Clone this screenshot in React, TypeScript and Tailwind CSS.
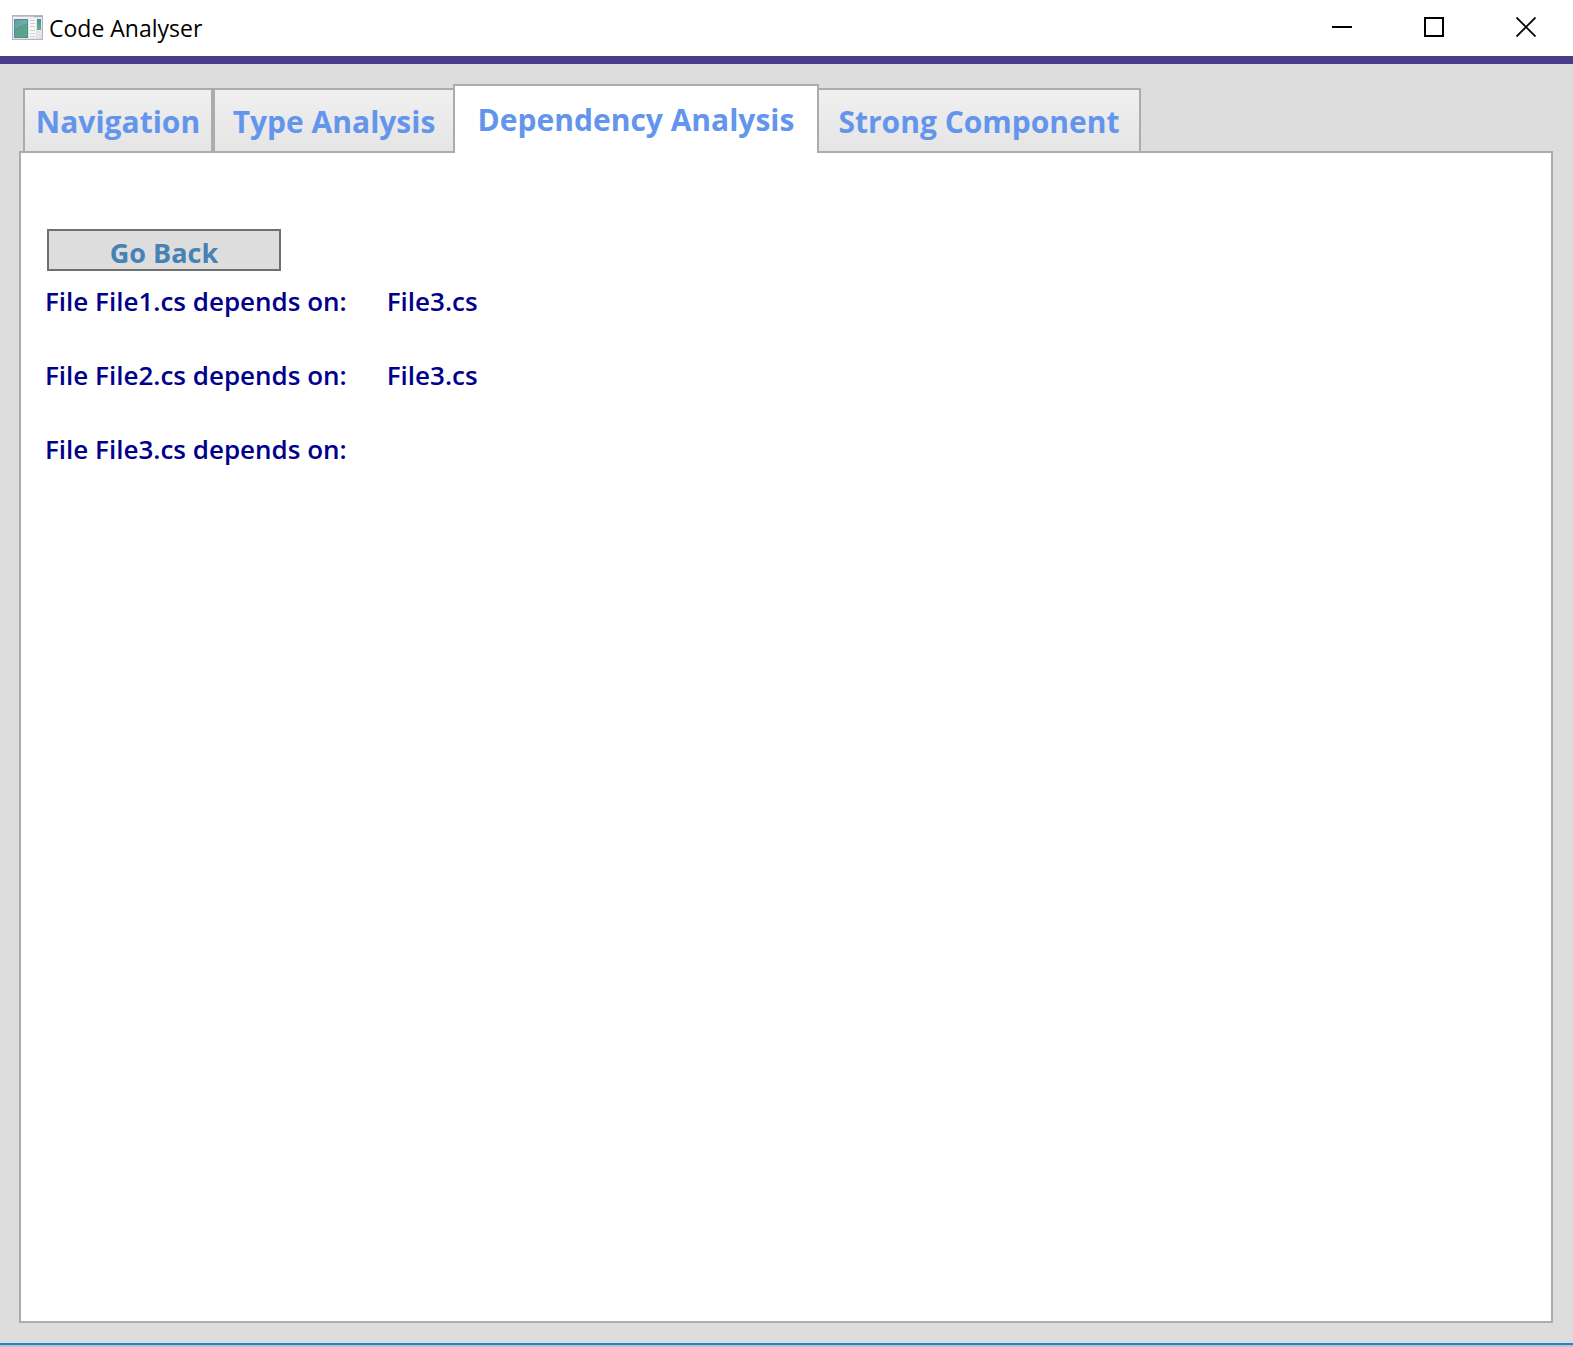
import { useState } from "react";

const tabs = [
  { label: "Navigation", width: "w-[190px]" },
  { label: "Type Analysis", width: "w-[240px]" },
  { label: "Dependency Analysis", width: "w-[366px]" },
  { label: "Strong Component", width: "w-[322px]" },
];

const dependencies = [
  { file: "File1.cs", on: ["File3.cs"] },
  { file: "File2.cs", on: ["File3.cs"] },
  { file: "File3.cs", on: [] as string[] },
];

function AppIcon() {
  return (
    <svg width="32" height="26" viewBox="0 0 32 26" aria-hidden="true">
      <defs>
        <linearGradient id="pane" x1="0" y1="0" x2="1" y2="1">
          <stop offset="0" stopColor="#4a86a4" />
          <stop offset="0.4" stopColor="#5a9f92" />
          <stop offset="1" stopColor="#56ad74" />
        </linearGradient>
        <linearGradient id="side" x1="0" y1="0" x2="0" y2="1">
          <stop offset="0" stopColor="#4f8fa0" />
          <stop offset="1" stopColor="#5fb37c" />
        </linearGradient>
        <linearGradient id="frame" x1="0" y1="0" x2="1" y2="1">
          <stop offset="0" stopColor="#f7f7f7" />
          <stop offset="1" stopColor="#d9dce2" />
        </linearGradient>
      </defs>
      <rect x="0.5" y="0.5" width="30" height="24" fill="url(#frame)" stroke="#b4b6ba" />
      <path d="M1 1.5h29" stroke="#c4c8cc" />
      <path d="M22 1.5h8" stroke="#a3abb4" />
      <rect x="2.5" y="4.5" width="13" height="18" fill="url(#pane)" stroke="#4c8aa6" />
      <path d="M3 5h12v4C10 9 6 11 3 14z" fill="#fff" opacity="0.14" />
      <rect x="17" y="4" width="7" height="19" fill="#f8f8f8" />
      <path d="M18 5.5h5M18 8.5h5M18 11.5h5M18 15.5h5M18 18.5h5M18 21.5h5" stroke="#cfcfcf" />
      <rect x="25" y="4" width="4" height="11" fill="url(#side)" />
      <rect x="25" y="15" width="4" height="8" fill="#e3e6ee" />
    </svg>
  );
}

export default function App() {
  const [selected, setSelected] = useState(2);

  return (
    <div className="flex min-h-screen flex-col bg-[#dddddd] font-['Open_Sans','Noto_Sans',sans-serif]">
      <header className="flex h-14 items-center justify-between bg-white">
        <div className="flex items-center gap-[5px] pl-3">
          <AppIcon />
          <h1 className="text-[23px] leading-8 text-black">Code Analyser</h1>
        </div>
        <div className="flex h-full pr-px pb-0.5">
          <button type="button" aria-label="Minimize" className="flex w-[92px] items-center justify-center">
            <svg width="20" height="20" viewBox="0 0 20 20" stroke="#000" strokeWidth="2">
              <path d="M0 10h20" />
            </svg>
          </button>
          <button type="button" aria-label="Maximize" className="flex w-[92px] items-center justify-center">
            <svg width="20" height="20" viewBox="0 0 20 20" fill="none" stroke="#000" strokeWidth="2">
              <path d="M1 1h18v18H1z" />
            </svg>
          </button>
          <button type="button" aria-label="Close" className="flex w-[92px] items-center justify-center">
            <svg width="20" height="20" viewBox="0 0 20 20" stroke="#000" strokeWidth="1.8">
              <path d="M0.5 0.5l19 19M19.5 0.5l-19 19" />
            </svg>
          </button>
        </div>
      </header>
      <div className="h-2 bg-[#483d8b]" />

      <main className="flex grow flex-col pt-5 pr-5 pb-5 pl-[19px]">
        <div role="tablist" className="z-10 -mb-0.5 flex items-end pl-1">
          {tabs.map((tab, i) => (
            <button
              key={tab.label}
              type="button"
              role="tab"
              id={`tab-${i}`}
              aria-selected={i === selected}
              aria-controls="tab-panel"
              onClick={() => setSelected(i)}
              className={`${tab.width} border-2 border-[#acacac] text-center text-[30px] leading-10 font-bold whitespace-nowrap text-[#6495ed] ${
                i === selected
                  ? "h-[69px] border-b-0 bg-white"
                  : "h-[65px] bg-linear-to-b from-[#f0f0f0] to-[#e5e5e5] pt-0.5"
              } ${i === selected + 1 ? "border-l-0" : ""} ${i === selected - 1 ? "border-r-0" : ""}`}
            >
              {tab.label}
            </button>
          ))}
        </div>

        <section
          id="tab-panel"
          role="tabpanel"
          aria-labelledby={`tab-${selected}`}
          className="flex grow flex-col items-start border-2 border-[#acacac] bg-white px-6 pt-[76px]"
        >
          <button
            type="button"
            className="ml-0.5 h-[42px] w-[234px] border-2 border-[#707070] bg-[#dddddd] pt-1.5 text-[27px] leading-8 font-bold text-[#4682b4]"
          >
            Go Back
          </button>
          <ul className="pt-3 text-[26px] leading-[37px] font-semibold text-[#00008b]">
            {dependencies.map((d) => (
              <li key={d.file} className="flex gap-10 pb-[37px]">
                <span>File {d.file} depends on:</span>
                {d.on.map((name) => (
                  <span key={name}>{name}</span>
                ))}
              </li>
            ))}
          </ul>
        </section>
      </main>
      <footer className="h-1 border-t-2 border-[#1883d7] bg-[#c3c3c3]" />
    </div>
  );
}
